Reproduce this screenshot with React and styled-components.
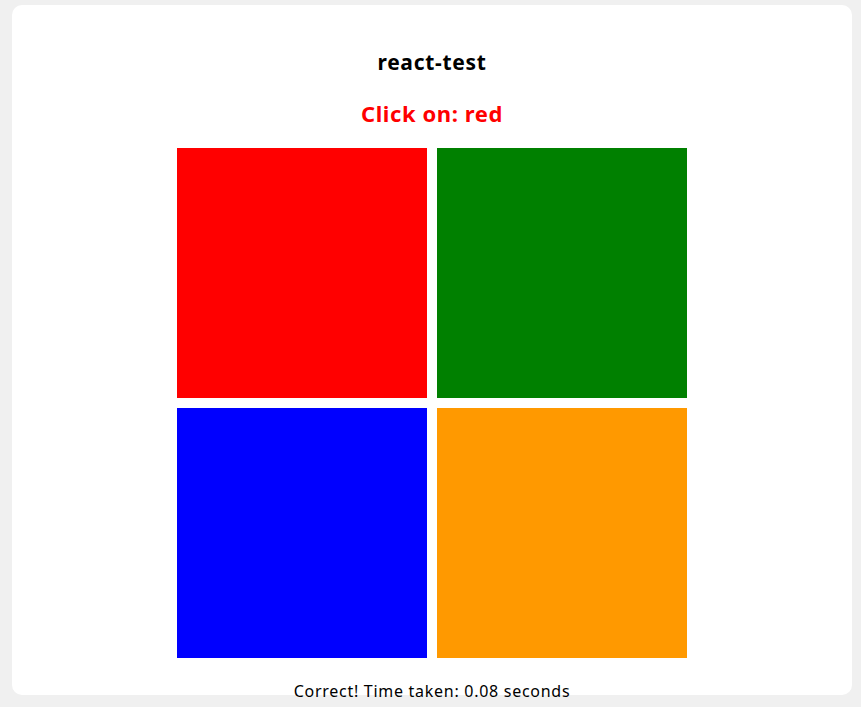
import React from "react";
import styled, { createGlobalStyle } from "styled-components";

const Global = createGlobalStyle`
  html, body { margin: 0; padding: 0; background: #f0f0f0; }
  body { font-family: "Noto Sans", "Noto Sans CJK KR", sans-serif; }
`;

const Page = styled.div`
  padding: 5px 9px 0 12px;
  height: 707px;
  box-sizing: border-box;
  overflow: hidden;
`;

const Card = styled.div`
  background: #ffffff;
  border-radius: 10px;
  height: 690px;
  padding-top: 42px;
  box-sizing: border-box;
  display: flex;
  flex-direction: column;
  align-items: center;
`;

const Title = styled.h1`
  margin: 0;
  font-size: 21px;
  line-height: 30px;
  letter-spacing: 0.7px;
  font-weight: 700;
  color: #000;
`;

const Prompt = styled.h2`
  margin: 21px 0 0;
  font-size: 22px;
  line-height: 30px;
  letter-spacing: 0.6px;
  font-weight: 700;
  color: ${(p) => p.$color};
`;

const Grid = styled.div`
  margin-top: 20px;
  display: grid;
  grid-template-columns: repeat(2, 250px);
  grid-auto-rows: 250px;
  gap: 10px;
`;

const Tile = styled.div`
  background: ${(p) => p.$color};
  cursor: pointer;
`;

const Result = styled.p`
  margin: 21px 0 0;
  font-size: 16px;
  line-height: 24px;
  letter-spacing: 0.72px;
  color: #000;
`;

const colors = [
  { name: "red", value: "#ff0000" },
  { name: "green", value: "#008000" },
  { name: "blue", value: "#0000ff" },
  { name: "orange", value: "#ff9900" },
];

export default function App() {
  return (
    <>
      <Global />
      <Page>
        <Card>
          <Title>react-test</Title>
          <Prompt $color="#ff0000">Click on: red</Prompt>
          <Grid>
            {colors.map((c) => (
              <Tile key={c.name} $color={c.value} />
            ))}
          </Grid>
          <Result>Correct! Time taken: 0.08 seconds</Result>
        </Card>
      </Page>
    </>
  );
}
